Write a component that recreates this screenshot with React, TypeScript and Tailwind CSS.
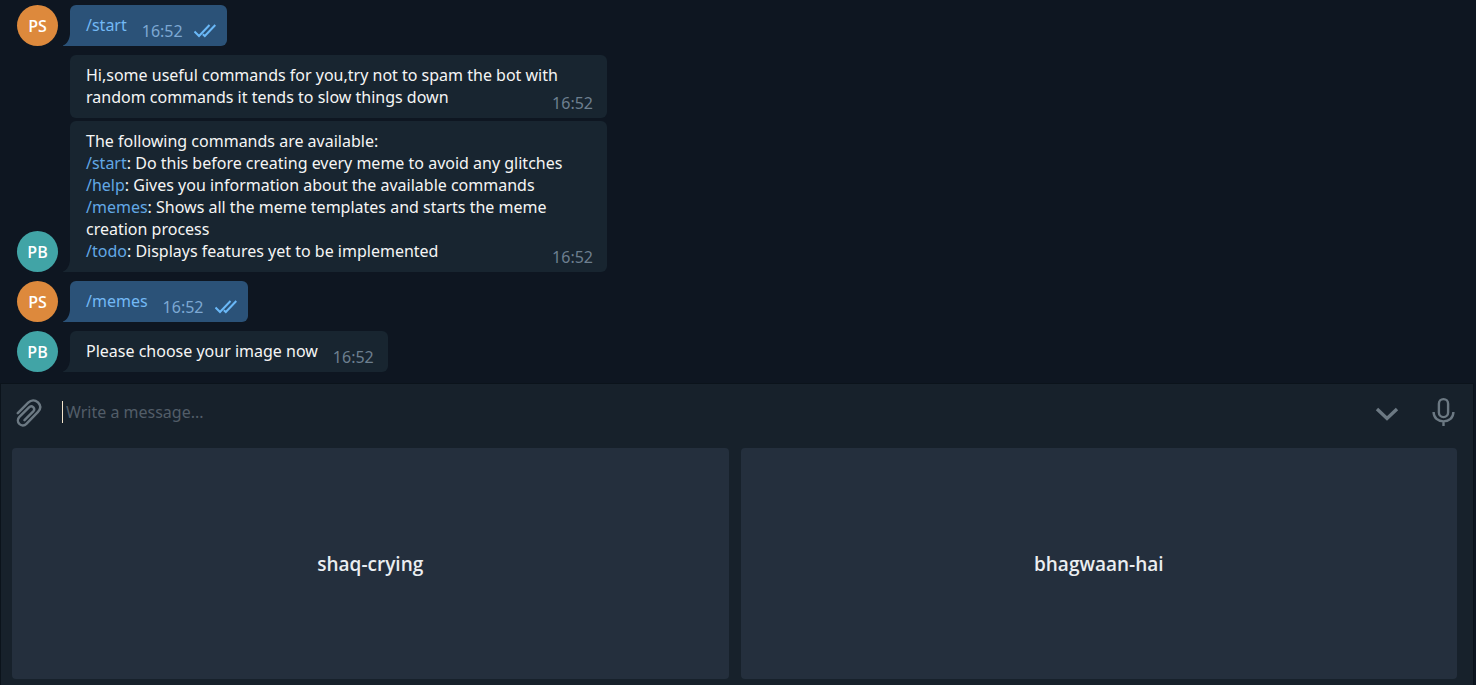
import type { ReactNode } from "react";

function Avatar({ name }: { name: "PS" | "PB" }) {
  return (
    <div
      className={`flex size-[41px] shrink-0 items-center justify-center rounded-full font-['Open_Sans',sans-serif] text-base font-semibold text-white ${
        name === "PS" ? "bg-[#dd893c]" : "bg-[#41a4a6]"
      }`}
    >
      {name}
    </div>
  );
}

function Ticks() {
  return (
    <svg className="mb-1 ml-[11px] h-[14px] w-[22px]" viewBox="0 0 22 14" fill="none" stroke="#6ab8f7" strokeWidth="2">
      <path d="M0.5 7.5 L5 12 L15.5 1" />
      <path d="M8.8 10.2 L10.8 12 L21.3 1" />
    </svg>
  );
}

type MessageProps = { from?: "PS" | "PB"; sent?: boolean; wide?: boolean; children: ReactNode };

function Message({ from, sent, wide, children }: MessageProps) {
  return (
    <div className="flex items-end">
      <div className="flex w-[46px] shrink-0">
        {from && <Avatar name={from} />}
      </div>
      <svg className={`h-3 w-[7px] shrink-0 ${from ? "" : "invisible"}`} viewBox="0 0 7 12">
        <path d="M7 0 C6.5 5.5 4.5 9.5 0 11.5 L0 12 H7 Z" fill={sent ? "#2b5278" : "#182530"} />
      </svg>
      <div
        className={`rounded-md pt-[9px] pb-1 pl-4 ${sent ? "bg-[#2b5278] pr-[11px]" : "bg-[#182530] pr-3.5"} ${
          from ? "rounded-bl-none" : ""
        } ${wide ? "grid w-[537px]" : "flex items-end"}`}
      >
        <div className={`pb-1.5 ${wide ? "col-start-1 row-start-1" : "mr-[15px]"} ${sent ? "text-[#73b9f5]" : "text-[#f5f5f5]"}`}>
          {children}
        </div>
        <div
          className={`flex items-end ${wide ? "col-start-1 row-start-1 self-end justify-self-end" : ""} ${
            sent ? "text-[#7da8d3]" : "text-[#6d7f8f]"
          }`}
        >
          <time>16:52</time>
          {sent && <Ticks />}
        </div>
      </div>
    </div>
  );
}

function Command({ name }: { name: string }) {
  return (
    <a href={`#${name}`} className="text-[#62a8e5]">
      /{name}
    </a>
  );
}

export default function App() {
  return (
    <div className="flex min-h-screen flex-col bg-[#0e1621] font-['Noto_Sans','Open_Sans',sans-serif] text-base leading-[22px]">
      <main className="flex flex-col gap-[9px] px-[17px] pt-[5px] pb-[11px]">
        <Message from="PS" sent>/start</Message>
        <div className="flex flex-col gap-[3px]">
          <Message wide>
            Hi,some useful commands for you,try not to spam the bot with random commands it tends to slow things down
          </Message>
          <Message from="PB" wide>
            <p>The following commands are available:</p>
            <p><Command name="start" />: Do this before creating every meme to avoid any glitches</p>
            <p><Command name="help" />: Gives you information about the available commands</p>
            <p><Command name="memes" />: Shows all the meme templates and starts the meme creation process</p>
            <p><Command name="todo" />: Displays features yet to be implemented</p>
          </Message>
        </div>
        <Message from="PS" sent>/memes</Message>
        <Message from="PB">Please choose your image now</Message>
      </main>

      <footer className="mr-0.5 flex flex-1 flex-col border-x border-t border-[#0b131b] bg-[#17212b]">
        <form className="flex h-16 items-center pr-[18px] pb-2 pl-[15px]">
          <button type="button" aria-label="Attach file" className="mt-0.5 shrink-0">
            <svg className="h-7 w-[26px]" viewBox="0 0 26 28" fill="none" stroke="#6c7983" strokeWidth="2.4" strokeLinecap="round">
              <path d="M1.8 14.2 L12.2 3.7 C15.2 0.7 19 .7 22 3.4 C25 6.4 24.8 10 22 12.9 L10.4 24.8 C8.4 26.9 5.4 27 3.4 25 C1.3 22.9 1.4 20 3.4 17.9 L13 8.3 C14.4 6.9 16 7 17.2 8.1 C18.5 9.4 18.4 11.1 17.2 12.4 L8.5 21.2" />
            </svg>
          </button>
          <span className="ml-5 h-[22px] w-px shrink-0 bg-[#f5e6cc]" />
          <input
            type="text"
            aria-label="Message"
            placeholder="Write a message..."
            className="ml-[3px] min-w-0 flex-1 bg-transparent text-white outline-none placeholder:text-[#525d68]"
          />
          <button type="button" aria-label="Hide keyboard" className="shrink-0">
            <svg className="mt-1 h-4 w-6" viewBox="0 0 24 16" fill="none" stroke="#6c7983" strokeWidth="3.4">
              <path d="M2 3 L12 12.5 L22 3" />
            </svg>
          </button>
          <button type="button" aria-label="Record voice message" className="ml-[33px] shrink-0">
            <svg className="h-[30px] w-[23px]" viewBox="0 0 23 30" fill="none" stroke="#6c7983" strokeWidth="2.4">
              <rect x="6.9" y="2.1" width="9.2" height="18" rx="4.6" />
              <path d="M1.6 15 C1.6 21 6 24.4 11.5 24.4 S21.4 21 21.4 15 M11.5 24.4 V29" />
            </svg>
          </button>
        </form>
        <div className="grid flex-1 grid-cols-2 gap-3 pr-4 pb-1.5 pl-[11px] font-['Open_Sans',sans-serif] text-[19px] font-semibold text-[#ebeef1]">
          <button type="button" className="rounded bg-[#242f3d]">shaq-crying</button>
          <button type="button" className="rounded bg-[#242f3d]">bhagwaan-hai</button>
        </div>
      </footer>
    </div>
  );
}
